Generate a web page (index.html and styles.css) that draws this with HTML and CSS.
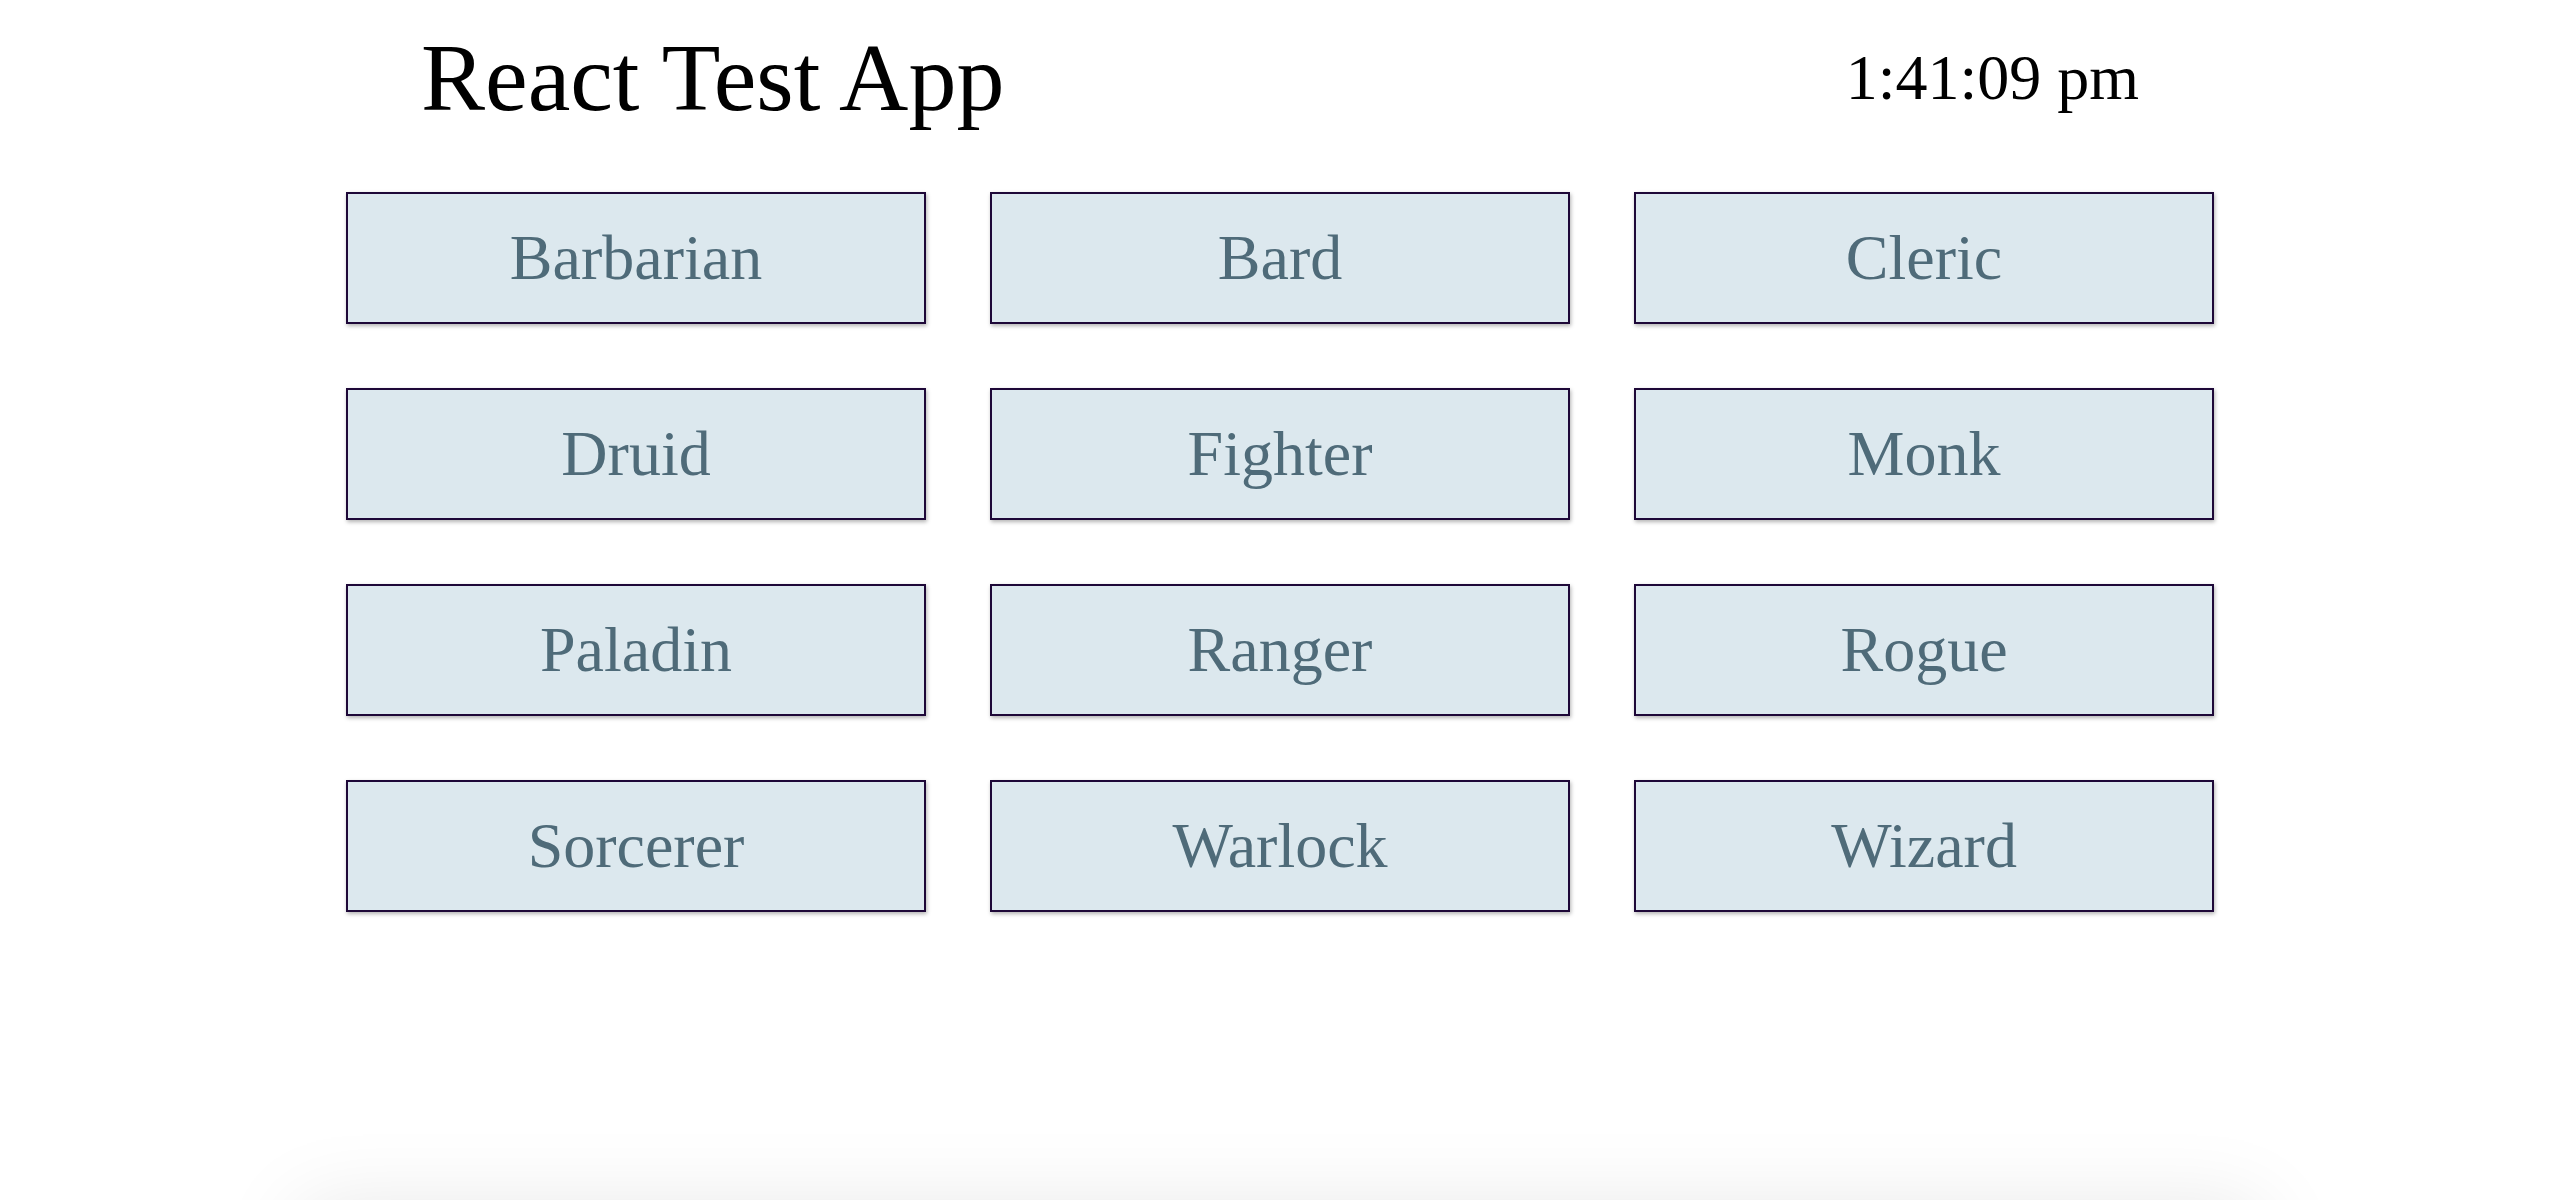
FILE: index.html
```html
<!DOCTYPE html>
<html lang="en">
<head>
<meta charset="utf-8">
<title>React Test App</title>
<link rel="stylesheet" href="styles.css">
</head>
<body>
<div class="app">
  <header class="header">
    <h1 class="title">React Test App</h1>
    <div class="clock">1:41:09 pm</div>
  </header>
  <main class="classes">
    <button class="class-btn">Barbarian</button>
    <button class="class-btn">Bard</button>
    <button class="class-btn">Cleric</button>
    <button class="class-btn">Druid</button>
    <button class="class-btn">Fighter</button>
    <button class="class-btn">Monk</button>
    <button class="class-btn">Paladin</button>
    <button class="class-btn">Ranger</button>
    <button class="class-btn">Rogue</button>
    <button class="class-btn">Sorcerer</button>
    <button class="class-btn">Warlock</button>
    <button class="class-btn">Wizard</button>
  </main>
  <section class="details"></section>
</div>
</body>
</html>
```

FILE: styles.css
```css
html, body {
  margin: 0;
  padding: 0;
  background: #ffffff;
}

body {
  font-family: "Liberation Serif", "Times New Roman", serif;
  color: #000000;
}

.app {
  height: 1200px;
  overflow: hidden;
  display: flex;
  flex-direction: column;
  align-items: center;
}

.header {
  box-sizing: border-box;
  width: 1868px;
  height: 155px;
  padding: 0 75px;
  display: flex;
  justify-content: space-between;
  align-items: center;
  flex-shrink: 0;
}

.title {
  margin: 0;
  font-size: 96px;
  font-weight: normal;
  line-height: 1;
}

.clock {
  font-size: 64px;
  line-height: 1;
}

.classes {
  margin-top: 37px;
  display: grid;
  grid-template-columns: repeat(3, 580px);
  grid-auto-rows: 132px;
  gap: 64px;
  flex-shrink: 0;
}

.class-btn {
  box-sizing: border-box;
  margin: 0;
  padding: 0;
  border: 2px solid #1e0838;
  background: #dce8ee;
  color: #4f6b79;
  font-family: "Liberation Serif", "Times New Roman", serif;
  font-size: 64px;
  box-shadow: 1px 2px 4px rgba(0, 0, 0, 0.3);
  cursor: pointer;
}

.details {
  flex-shrink: 0;
  margin-top: 296px;
  width: 1960px;
  height: 400px;
  background: #ffffff;
  box-shadow: 0 0 80px rgba(0, 0, 0, 0.1);
}
```
